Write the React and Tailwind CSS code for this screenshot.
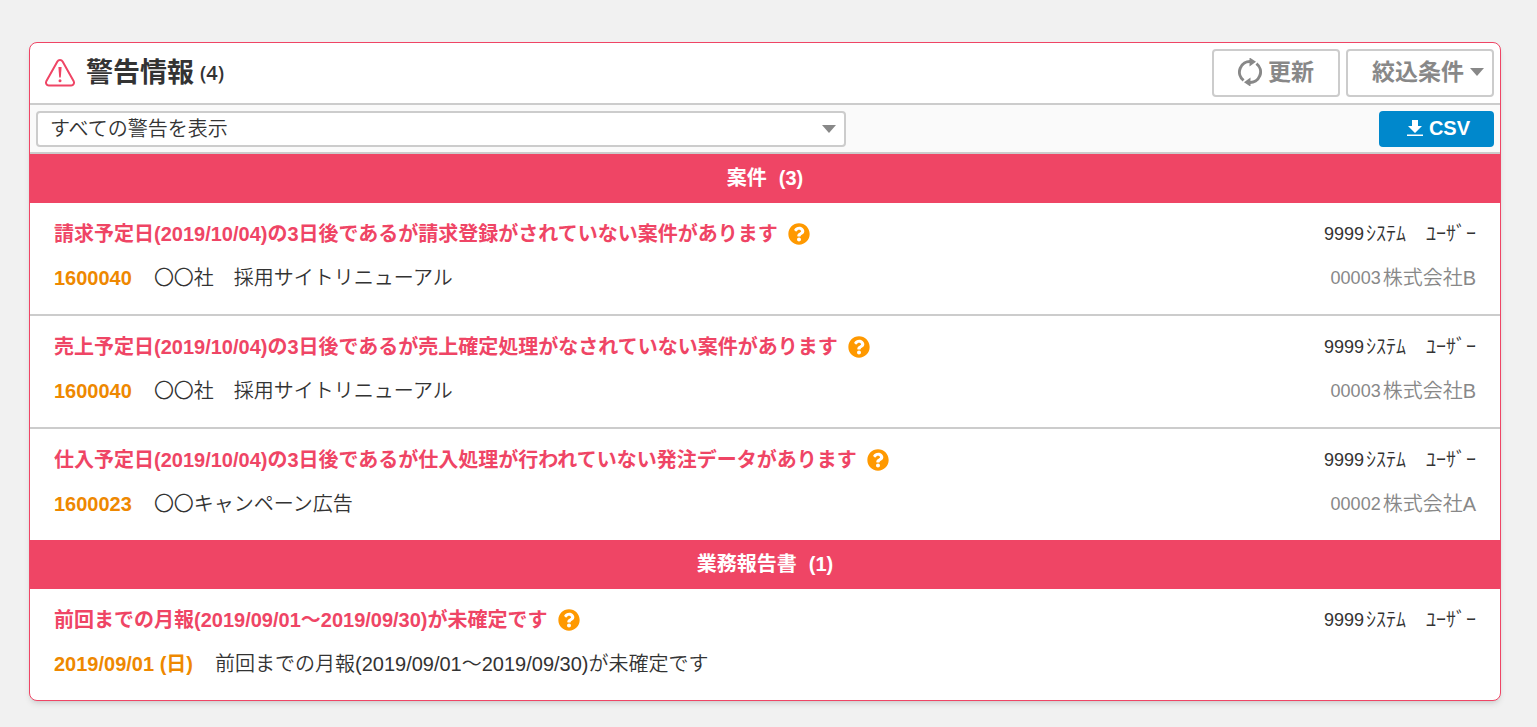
import React from 'react';
import { FaQuestionCircle } from 'react-icons/fa';

const sections = [
  {
    title: '案件',
    items: [
      {
        message: '請求予定日(2019/10/04)の3日後であるが請求登録がされていない案件があります',
        code: '1600040',
        name: '〇〇社　採用サイトリニューアル',
        client: { code: '00003', name: '株式会社B' },
      },
      {
        message: '売上予定日(2019/10/04)の3日後であるが売上確定処理がなされていない案件があります',
        code: '1600040',
        name: '〇〇社　採用サイトリニューアル',
        client: { code: '00003', name: '株式会社B' },
      },
      {
        message: '仕入予定日(2019/10/04)の3日後であるが仕入処理が行われていない発注データがあります',
        code: '1600023',
        name: '〇〇キャンペーン広告',
        client: { code: '00002', name: '株式会社A' },
      },
    ],
  },
  {
    title: '業務報告書',
    items: [
      {
        message: '前回までの月報(2019/09/01～2019/09/30)が未確定です',
        code: '2019/09/01 (日)',
        name: '前回までの月報(2019/09/01～2019/09/30)が未確定です',
      },
    ],
  },
];

const WarningIcon = () => (
  <svg className="h-7 w-8 shrink-0" viewBox="0 0 32 28" fill="none" stroke="#ef4565" strokeWidth="2" aria-hidden="true">
    <path d="M13.4 2.6 2.3 22.2a2.9 2.9 0 0 0 2.5 4.3h22.4a2.9 2.9 0 0 0 2.5-4.3L18.6 2.6a3 3 0 0 0-5.2 0Z" />
    <path d="M14.4 8h3.2l-.8 10.5h-1.6Z" fill="#ef4565" stroke="none" />
    <circle cx="16" cy="21.8" r="1.5" fill="#ef4565" stroke="none" />
  </svg>
);

const RefreshIcon = () => (
  <svg className="h-7 w-6 shrink-0" viewBox="0 0 24 28" fill="none" stroke="currentColor" strokeWidth="3" aria-hidden="true">
    <path d="M5.6 22.4A10.5 10.5 0 0 1 13 3.6" />
    <path d="M18.4 5.6A10.5 10.5 0 0 1 11 24.4" />
    <path d="M11.5 -.6l6.500 4.300-6.500 4.700ZM12.500 28.600l-6.500-4.300 6.500-4.700Z" fill="currentColor" stroke="none" />
  </svg>
);

const DownloadIcon = () => (
  <svg className="h-4 w-4 shrink-0" viewBox="0 0 16 16" fill="currentColor" aria-hidden="true">
    <path d="M5 0h6v6h4l-7 7-7-7h4ZM0 14.5h16v1.5H0Z" />
  </svg>
);

const Caret = () => (
  <svg className="h-2 w-3.5 shrink-0" viewBox="0 0 14 8" fill="#888888" aria-hidden="true">
    <path d="M0 0h14L7 8Z" />
  </svg>
);

const WarningItem = ({ item }) => (
  <li className="flex justify-between gap-6 px-6 pt-[9px] pb-3.5">
    <div>
      <div className="flex h-11 items-center gap-2.5 font-bold text-[#ef4565]">
        <h3>{item.message}</h3>
        <button type="button" aria-label="ヘルプ" className="text-[22px] text-[#ff9900]">
          <FaQuestionCircle />
        </button>
      </div>
      <div className="flex h-11 items-center gap-5.5">
        <a href="#" className="font-bold text-[#ee8800]">{item.code}</a>
        <span>{item.name}</span>
      </div>
    </div>
    <div>
      <div className="flex h-11 items-center justify-end gap-0.5">
        <span className="text-[18px]">9999</span>
        <span>ｼｽﾃﾑ　ﾕｰｻﾞｰ</span>
      </div>
      {item.client && (
        <div className="flex h-11 items-center justify-end gap-0.5 text-[#888888]">
          <span className="text-[18px]">{item.client.code}</span>
          <span>{item.client.name}</span>
        </div>
      )}
    </div>
  </li>
);

const App = () => {
  const total = sections.reduce((sum, section) => sum + section.items.length, 0);

  return (
    <div className="min-h-screen bg-[#f1f1f1] pt-[42px] pr-9 pb-6 pl-[29px] font-['Liberation_Sans','Noto_Sans_CJK_JP',sans-serif] text-[20px] font-[350] text-[#333333]">
      <main className="overflow-hidden rounded-lg border border-[#ef4565] bg-white shadow-md">
        <header className="flex items-center justify-between border-b-2 border-[#cccccc] px-1.5 py-1.5">
          <div className="flex items-center gap-2.5 pl-2">
            <WarningIcon />
            <h1 className="flex items-center gap-1.5 text-[27px] leading-9 font-bold">
              警告情報
              <span className="font-['Open_Sans',sans-serif] text-[20px] font-semibold">({total})</span>
            </h1>
          </div>
          <div className="flex gap-1.5 text-[23px] font-bold text-[#888888]">
            <button type="button" className="flex h-12 items-center gap-1.5 rounded-sm border-2 border-[#cccccc] px-6 pb-0.5">
              <RefreshIcon />
              更新
            </button>
            <button type="button" className="flex h-12 items-center gap-1.5 rounded-sm border-2 border-[#cccccc] pr-2 pb-0.5 pl-6">
              絞込条件
              <Caret />
            </button>
          </div>
        </header>

        <div className="flex items-center justify-between border-b-2 border-[#cccccc] bg-[#fafafa] px-1.5 pt-1.5 pb-[5px]">
          <div className="relative w-5/9">
            <select aria-label="警告の種類" className="block h-9 w-full appearance-none rounded-sm border-2 border-[#cccccc] bg-white px-3">
              <option>すべての警告を表示</option>
            </select>
            <div className="pointer-events-none absolute inset-y-0 right-2.5 flex items-center">
              <Caret />
            </div>
          </div>
          <button type="button" className="flex h-9 items-center gap-1.5 rounded-sm bg-[#0088cc] pr-6 pb-0.5 pl-7 font-bold text-white">
            <DownloadIcon />
            CSV
          </button>
        </div>

        {sections.map((section) => (
          <section key={section.title}>
            <h2 className="flex h-[49px] items-center justify-center gap-3 bg-[#ef4565] pb-0.5 font-bold text-white">
              <span>{section.title}</span>
              <span>({section.items.length})</span>
            </h2>
            <ul className="divide-y-2 divide-[#cccccc]">
              {section.items.map((item) => (
                <WarningItem key={item.message} item={item} />
              ))}
            </ul>
          </section>
        ))}
      </main>
    </div>
  );
};

export default App;
